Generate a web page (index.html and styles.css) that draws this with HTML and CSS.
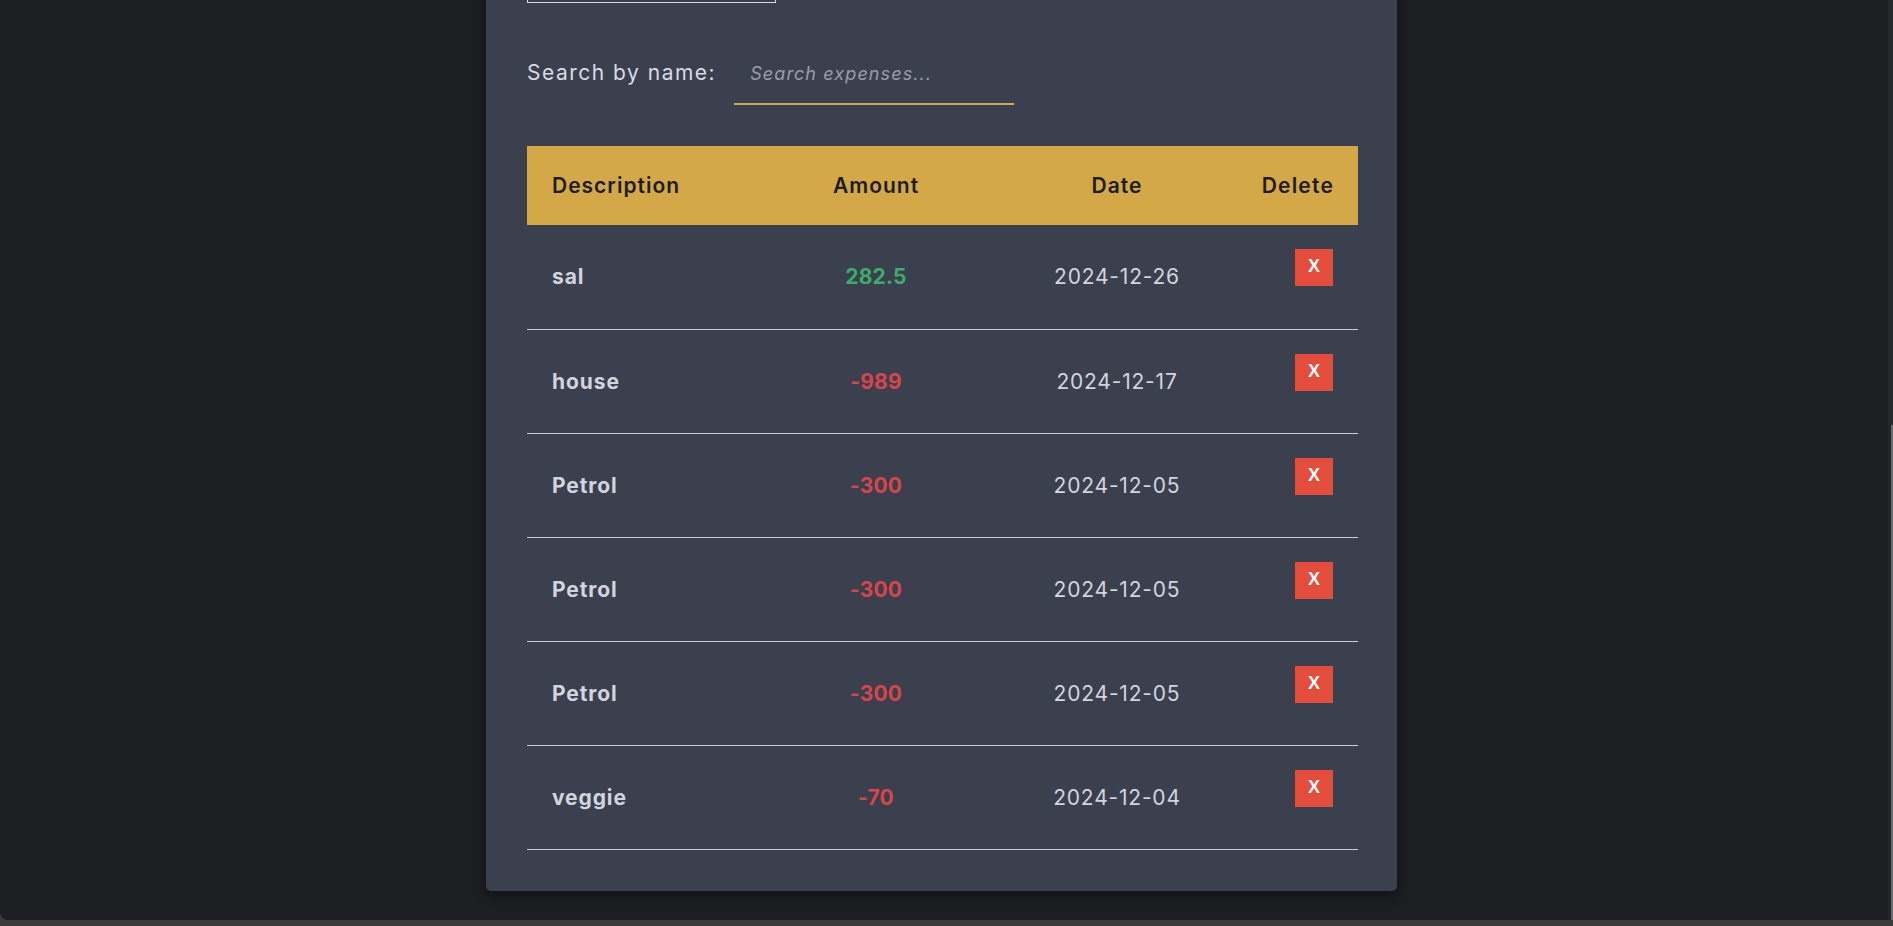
FILE: index.html
```html
<!DOCTYPE html>
<html lang="en">
<head>
<meta charset="utf-8">
<title>Expenses</title>
<link rel="stylesheet" href="styles.css">
</head>
<body>
<div class="window">
  <main class="stage">
    <section class="card">
      <div class="top-btn"></div>
      <div class="search-row">
        <label class="search-label" for="q">Search by name:</label>
        <input id="q" class="search-input" type="text" placeholder="Search expenses...">
      </div>
      <table class="expenses">
        <colgroup>
          <col class="c-desc"><col class="c-amt"><col class="c-date"><col class="c-del">
        </colgroup>
        <thead>
          <tr><th class="desc">Description</th><th class="amt">Amount</th><th class="date">Date</th><th class="del">Delete</th></tr>
        </thead>
        <tbody>
          <tr><td class="desc">sal</td><td class="amt pos">282.5</td><td class="date">2024-12-26</td><td class="del"><button class="x-btn">X</button></td></tr>
          <tr><td class="desc">house</td><td class="amt neg">-989</td><td class="date">2024-12-17</td><td class="del"><button class="x-btn">X</button></td></tr>
          <tr><td class="desc">Petrol</td><td class="amt neg">-300</td><td class="date">2024-12-05</td><td class="del"><button class="x-btn">X</button></td></tr>
          <tr><td class="desc">Petrol</td><td class="amt neg">-300</td><td class="date">2024-12-05</td><td class="del"><button class="x-btn">X</button></td></tr>
          <tr><td class="desc">Petrol</td><td class="amt neg">-300</td><td class="date">2024-12-05</td><td class="del"><button class="x-btn">X</button></td></tr>
          <tr><td class="desc">veggie</td><td class="amt neg">-70</td><td class="date">2024-12-04</td><td class="del"><button class="x-btn">X</button></td></tr>
        </tbody>
      </table>
    </section>
  </main>
  <div class="scrollbar"><div class="thumb"></div></div>
</div>
</body>
</html>
```
FILE: styles.css
```css
* { box-sizing: border-box; }
html, body { margin: 0; padding: 0; }
body {
  background: #3b3b3c;
  height: 926px;
  overflow: hidden;
  font-family: Inter, "Open Sans", sans-serif;
}
.window {
  height: 920px;
  background: #1d1e21;
  border-bottom-left-radius: 8px;
  display: flex;
  overflow: hidden;
}
.stage {
  flex: 1;
  padding-left: 486px;
}
.card {
  width: 911px;
  background: #3b404e;
  padding: 0 39px 41px 41px;
  border-radius: 0 0 5px 5px;
  box-shadow: 0 4px 12px rgba(0, 0, 0, 0.45);
}
.top-btn {
  width: 249px;
  height: 40px;
  margin-top: -37px;
  border: 1px solid #d6d9e3;
}
.search-row {
  display: flex;
  align-items: baseline;
  margin-top: 52px;
}
.search-label {
  font-size: 21px;
  color: #d9dbe4;
  letter-spacing: 1.5px;
}
.search-input {
  margin-left: 18px;
  width: 280px;
  height: 50px;
  padding: 6px 16px 18px;
  border: none;
  border-bottom: 2px solid #d2a94f;
  background: transparent;
  color: #d9dbe4;
  font-family: Inter, "Open Sans", sans-serif;
  font-size: 18px;
  letter-spacing: 1.1px;
  font-style: italic;
  outline: none;
}
.search-input::placeholder { color: #9a9daa; }
.expenses {
  width: 100%;
  margin-top: 41px;
  border-collapse: collapse;
  table-layout: fixed;
}
.c-desc { width: 233px; }
.c-amt { width: 232px; }
.c-date { width: 250px; }
.c-del { width: 116px; }
.expenses th {
  height: 79px;
  background: #d4a846;
  color: #1d1d1d;
  font-size: 21px;
  font-weight: 600;
  letter-spacing: 1px;
  padding: 0 25px;
}
.expenses td {
  height: 104px;
  padding: 0 25px;
  border-bottom: 1px solid #c9ccd6;
  font-size: 21px;
  color: #d2d5de;
  vertical-align: middle;
}
.desc { text-align: left; }
.amt, .date { text-align: center; padding: 0 !important; }
.del { text-align: right; }
th.del { padding: 0 24px 0 0 !important; letter-spacing: 1.2px; }
td.desc { font-weight: 700; letter-spacing: 0.9px; }
td.amt { font-weight: 700; letter-spacing: 0.2px; }
td.date { font-weight: 400; letter-spacing: 0.8px; }
td.del { vertical-align: top; padding-top: 24px; }
.pos { color: #3dab6b !important; }
.neg { color: #d8454b !important; }
.x-btn {
  width: 38px;
  height: 37px;
  border: none;
  background: #e44c3c;
  color: #ffffff;
  font-family: "Liberation Sans", Arial, sans-serif;
  font-weight: 700;
  font-size: 18px;
  padding: 0 0 2px;
}
.scrollbar {
  width: 5px;
  background: #26272a;
  display: flex;
  justify-content: flex-end;
}
.thumb {
  width: 2px;
  margin-top: 425px;
  background: #6a6b6f;
}
```
